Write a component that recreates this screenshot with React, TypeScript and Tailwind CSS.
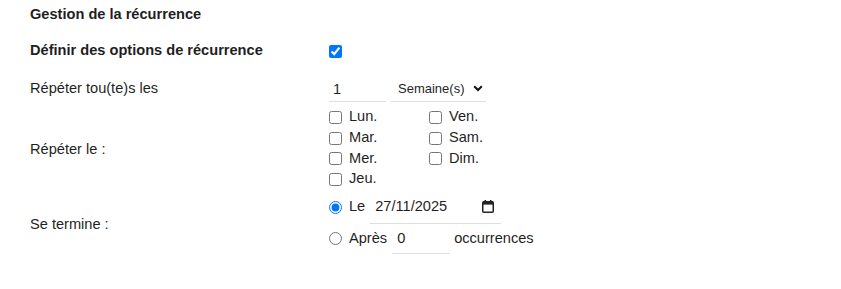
import React from "react";

const days = [
  ["Lun.", "Ven."],
  ["Mar.", "Sam."],
  ["Mer.", "Dim."],
  ["Jeu.", ""],
];

function Check({ label, checked }: { label: string; checked?: boolean }) {
  return (
    <label className="flex items-center h-[20.7px]">
      <input type="checkbox" defaultChecked={checked} className="m-0 w-[13px] h-[13px]" />
      <span className="ml-[7px]">{label}</span>
    </label>
  );
}

function CalendarIcon() {
  return (
    <svg width="12" height="13" viewBox="0 0 12 13" className="text-[#222]">
      <rect x="2.5" y="0" width="1.6" height="2.5" fill="currentColor" />
      <rect x="7.9" y="0" width="1.6" height="2.5" fill="currentColor" />
      <rect x="0.75" y="1.75" width="10.5" height="10.5" rx="1" fill="none" stroke="currentColor" strokeWidth="1.5" />
      <rect x="1" y="2" width="10" height="2.6" fill="currentColor" />
    </svg>
  );
}

export default function App() {
  return (
    <div className="pl-[30px] pt-[4px] text-[14.6px] text-[#1f1f1f] font-['Liberation_Sans',Arial,sans-serif]">
      <div className="h-5 leading-5 font-bold">Gestion de la récurrence</div>

      <div className="mt-[17px] h-5 flex items-center">
        <div className="w-[299px] font-bold">Définir des options de récurrence</div>
        <input type="checkbox" defaultChecked className="m-0 w-[13px] h-[13px]" />
      </div>

      <div className="mt-[15px] h-[26px] flex items-center">
        <div className="w-[299px]">Répéter tou(te)s les</div>
        <input
          defaultValue="1"
          className="w-[57px] h-[26px] px-[4px] border-b border-[#dedede] outline-none bg-transparent"
        />
        <div className="ml-[5px] w-[95px] h-[26px] pl-[7px] pr-[3px] flex items-center justify-between border-b border-[#dedede] text-[13px]">
          <span>Semaine(s)</span>
          <svg width="10" height="7" viewBox="0 0 10 7">
            <path d="M1.2 1.3 L5 5 L8.8 1.3" fill="none" stroke="#111" strokeWidth="2" />
          </svg>
        </div>
      </div>

      <div className="mt-[5px] flex">
        <div className="w-[299px] flex items-center pt-[3px]">Répéter le :</div>
        <div className="grid grid-cols-[100px_100px]">
          {days.map(([a, b]) => (
            <React.Fragment key={a}>
              <Check label={a} />
              {b ? <Check label={b} /> : <div />}
            </React.Fragment>
          ))}
        </div>
      </div>

      <div className="mt-[4px] flex">
        <div className="w-[299px] flex items-center pt-[3px]">Se termine :</div>
        <div className="flex flex-col">
          <div className="h-[30px] flex items-center">
            <input type="radio" name="end" defaultChecked className="m-0 mb-[3px] w-[13px] h-[13px]" />
            <span className="ml-[7px] mb-[3px]">Le</span>
            <div className="ml-[5px] w-[131px] h-[30px] pl-[5px] pr-[7px] pb-[3px] flex items-center justify-between border-b border-[#dedede]">
              <span>27/11/2025</span>
              <CalendarIcon />
            </div>
          </div>
          <div className="h-[30px] flex items-center">
            <input type="radio" name="end" className="m-0 w-[13px] h-[13px]" />
            <span className="ml-[7px]">Après</span>
            <input
              defaultValue="0"
              className="ml-[5px] w-[58px] h-[30px] px-[5px] border-b border-[#dedede] outline-none bg-transparent"
            />
            <span className="ml-[4px]">occurrences</span>
          </div>
        </div>
      </div>
    </div>
  );
}
